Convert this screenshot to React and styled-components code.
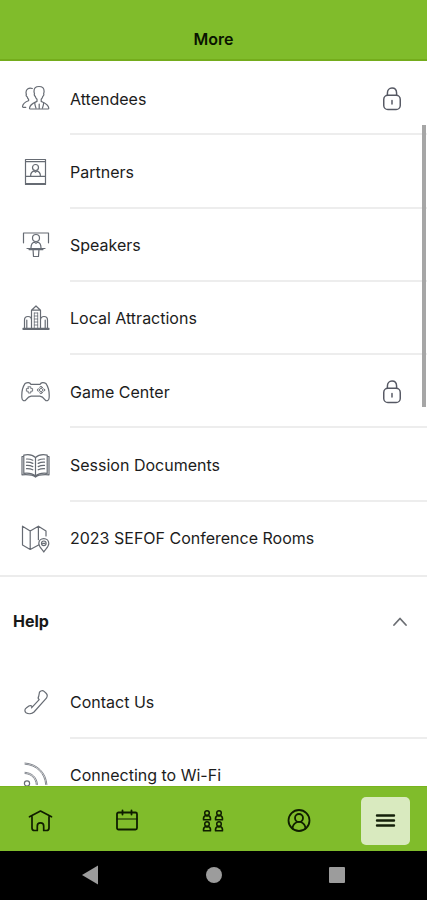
import React from "react";
import styled, { createGlobalStyle } from "styled-components";

const GlobalStyle = createGlobalStyle`
  *, *::before, *::after { box-sizing: border-box; }
  body { margin: 0; background: #fff; }
  button { font: inherit; color: inherit; background: none; border: 0; padding: 0; cursor: pointer; }
`;

const Screen = styled.div`
  position: relative;
  display: flex;
  flex-direction: column;
  height: 100vh;
  overflow: hidden;
  background: #fff;
  color: #1c1c1c;
  font-family: Inter, "Liberation Sans", sans-serif;
  font-size: 16px;
  line-height: 24px;
`;

const Header = styled.header`
  flex: none;
  display: flex;
  justify-content: center;
  padding: 27px 16px 8px;
  background: #80bc2b;
  border-bottom: 2px solid #74ac1c;
`;

const Title = styled.h1`
  margin: 0;
  color: #0a1400;
  font-size: 16px;
  font-weight: 600;
  line-height: 24px;
`;

const Content = styled.main`
  position: relative;
  flex: 1;
  min-height: 0;
  overflow: hidden;
`;

const ScrollThumb = styled.div`
  position: absolute;
  top: 64px;
  right: 1px;
  width: 4px;
  height: 282px;
  background: #a6a6a6;
`;

const List = styled.ul`
  display: grid;
  grid-auto-rows: 1fr;
  margin: 0;
  padding: 1px 0 0;
  list-style: none;
  min-height: ${(p) => p.$minHeight}px;
  border-bottom: 2px solid #ececec;
`;

const Item = styled.li`
  display: flex;
  min-height: 73px;
`;

const ItemLink = styled.a`
  flex: 1;
  display: flex;
  color: inherit;
  text-decoration: none;
`;

const IconSlot = styled.span`
  flex: none;
  display: flex;
  align-items: center;
  justify-content: center;
  width: 70px;
`;

const ItemBody = styled.span`
  flex: 1;
  display: flex;
  align-items: center;
  justify-content: space-between;
  padding: 2px 24px 0 0;
  border-bottom: 2px solid #ededed;
  ${Item}:last-child & { border-bottom-color: transparent; }
`;

const SectionToggle = styled.button`
  display: flex;
  align-items: center;
  justify-content: space-between;
  width: 100%;
  height: 87px;
  padding: 0 19px 0 13px;
  color: #181818;
  font-weight: 700;
`;

const TabBar = styled.nav`
  flex: none;
  display: flex;
  justify-content: space-between;
  padding: 10px 17px 6px 16px;
  background: #80bc2b;
  border-top: 1px solid #78b41e;
`;

const Tab = styled.button`
  display: flex;
  align-items: center;
  justify-content: center;
  width: 49px;
  height: 48px;
  border-radius: 5px;
  color: #0c1900;
  background: ${(p) => (p.$active ? "#d9eabf" : "transparent")};
`;

const SystemBar = styled.div`
  flex: none;
  display: flex;
  align-items: center;
  justify-content: space-between;
  height: 49px;
  padding: 0 18% 2px;
  background: #000;
  color: #9c9c9c;
`;

const SystemButton = styled.button`
  display: flex;
  align-items: center;
  justify-content: center;
`;

const Line = styled.svg`
  display: block;
  flex: none;
  fill: none;
  stroke: ${(p) => p.$color || "#666b73"};
  stroke-width: ${(p) => p.$weight || 1.2};
  stroke-linecap: round;
  stroke-linejoin: round;
`;

const icon = (children) => () => (
  <Line width="30" height="30" viewBox="0 0 30 30" aria-hidden="true">
    {children}
  </Line>
);

const AttendeesIcon = icon(
  <>
    <path d="M19 2.500c-3 0-5 1.800-5 4.800 0 1.200.3 1.800.5 2.600-.6.600 0 2 .8 2.400.3 1.400.9 2.200 1.700 2.900v2.200c-3.600 1.600-7 2.600-7.500 6.800 0 .6.3.8.9.8h17.500c.6 0 .9-.2.9-.8-.4-4.200-4-5.200-7.600-6.800v-2.200c.8-.7 1.300-1.500 1.600-2.900.9-.4 1.400-1.800.8-2.400.2-.8.500-1.400.5-2.600 0-3-2.100-4.800-5.100-4.800z" />
    <path d="M14.700 18.500c.1 2.400.6 3.900 1.300 5.700M23.700 18.500c-.1 2.400-.6 3.900-1.300 5.700M19.200 20v4.400" />
    <path d="M12.300 4.500C9 3.200 6 5 6 8.300c0 1 .2 1.500.4 2.200-.7.600-.1 1.900.8 2.300.2 1.300.8 1.900 1.400 2.500v1.400c-2.900 1.200-5.600 2.200-6.100 5.800 0 .5.300.8.900.8h2.400" />
  </>
);

const PartnersIcon = icon(
  <>
    <path d="M5.500 2.500h20v25h-20zM5.500 4.600h20M5.500 19.300h20M6.400 26.500h18.200" />
    <circle cx="15.500" cy="10.500" r="3" />
    <path d="M10.700 19v-1.300c.2-2.300 1.700-3.200 3.400-3.800l1.400 1.300 1.400-1.300c1.700.6 3.200 1.500 3.400 3.800V19" />
  </>
);

const SpeakersIcon = icon(
  <>
    <path d="M3.500 12.800V3h25v9.800" />
    <circle cx="16" cy="8" r="3.500" />
    <path d="M11 18c0-3.500 1.400-5.400 3.500-5.800L16 13.400l1.500-1.200c2.100.4 3.500 2.300 3.500 5.800" />
    <path d="M7 18.500h18M13 18.700l.5 7.800h5l.5-7.800M9 19.600h14" />
  </>
);

const CityIcon = icon(
  <>
    <path d="M3 26.500h26M3 25.400h26M11.500 25V7.200L16 3l4.500 4.200V25M12 7.200h8M4.500 25V17c0-2 1.500-3.500 3.500-3.500s3.500 1.300 3.500 3.500M20.500 17c0-2.200 1.500-3.500 3.500-3.500s3.500 1.500 3.500 3.500v8M6.800 25v-8M25.200 25v-8" />
    <path d="M14.300 10v15M17.700 10v15M14.300 10h3.400M14.300 13h3.400M14.300 16h3.400M14.300 19h3.400M14.300 22h3.400" strokeWidth=".8" />
  </>
);

const GameIcon = icon(
  <>
    <path d="M10.800 7.300C10 5 7 5.200 5 6.600 2.500 10.200 1.500 16 1.900 21c.2 3.200 2.800 3.300 4 1.800 1.600-2 3.200-3.400 5.300-3.600h8.600c2.100.2 3.700 1.600 5.300 3.600 1.200 1.500 3.800 1.400 4-1.800.4-5-.6-10.800-3.100-14.400-2-1.400-5-1.600-5.800.7z" />
    <g strokeWidth=".9">
      <path d="M8.200 9.800h2.600v1.800h1.800v2.600h-1.800V16H8.200v-1.800H6.400v-2.600h1.800z" />
      <circle cx="21" cy="10.500" r="1.200" />
      <circle cx="18.500" cy="13" r="1.200" />
      <circle cx="23.500" cy="13" r="1.200" />
      <circle cx="21" cy="15.500" r="1.200" />
    </g>
  </>
);

const BookIcon = icon(
  <>
    <path d="M15.500 7.500C12.500 4.600 7.500 4.400 3.800 5.100v18.300c4.300-.5 8.700 0 11.700 2.600 3-2.600 7.400-3.100 11.700-2.600V5.100c-3.700-.7-8.700-.5-11.700 2.400zM15.500 7.500V25M3.800 6.500H2v18.300c5.500-.4 10.200-.7 13.500 2.300 3.300-3 8-2.700 13.500-2.300V6.500h-1.800" />
    <path d="M6.500 9c2.300-.1 4.500.3 6.300 1.200M6.500 12.200c2.300-.1 4.500.3 6.300 1.200M6.500 15.400c2.300-.1 4.500.3 6.300 1.200M6.500 18.600c2.300-.1 4.500.3 6.300 1.200M24.500 9c-2.300-.1-4.500.3-6.300 1.200M24.500 12.200c-2.300-.1-4.500.3-6.300 1.200M24.500 15.400c-2.300-.1-4.500.3-6.300 1.200M24.500 18.600c-2.300-.1-4.500.3-6.300 1.200" />
  </>
);

const MapIcon = icon(
  <>
    <path d="M18.600 22l-8.400 4.500L2.500 22V3.200l7.700 4.700 8.200-4.700 7.600 4.700v5M10.200 7.900v18.600M18.400 3.200v13.500" />
    <path d="M23.800 29c-1.400-2.500-5-4.900-5-8.400 0-2.900 2.200-5 5-5s5 2.100 5 5c0 3.500-3.600 5.900-5 8.400z" />
    <circle cx="23.800" cy="20.300" r="2.300" />
    <path d="M22.600 20.300h2.400" />
  </>
);

const PhoneIcon = icon(
  <path d="M19.500 5.200c1.200-1.600 3.200-2 4.600-.8l2 1.800c1.500 1.400 1.400 3.200.3 5L14 25c-2.200 2-5.700 2.200-8 .7-1.600-1.200-1.400-3.600.2-4.700l2.700-2c1.200-.7 2.600-.2 3.500.8l6.800-7.200c-1.200-1-1.200-2.300-.5-3.300zM12.400 19.800l-.9 1" />
);

const WifiIcon = icon(
  <>
    <circle cx="7" cy="23.500" r="2.600" />
    <path d="M5 4.200c11.500.7 20 9.200 20.700 20.300M5 3c12.300.8 21.200 9.800 21.900 21.500M5 13.500c6.500.5 10.800 4.800 11.300 11M5 12.300c7.200.5 12 5.200 12.500 12.200" strokeWidth=".8" />
  </>
);

const LockIcon = () => (
  <Line width="22" height="28" viewBox="0 0 24 30" $color="#555863" $weight={1.6} role="img" aria-label="Locked">
    <rect x="3" y="11" width="18" height="15.500" rx="4.500" />
    <path d="M7 11V8.500C7 5.200 9 3 12 3s5 2.200 5 5.500V11M12 16.500v4" />
  </Line>
);

const HomeIcon = () => (
  <Line width="26" height="26" viewBox="0 0 26 26" $color="#0f1d00" $weight={1.7} aria-hidden="true">
    <path d="M1.500 8.800 12.500 3l11 5.800M4 8.500V20c0 1.700 1 2.500 2.500 2.500h2.800V18c0-2 1.200-3.200 3.200-3.200s3.200 1.200 3.200 3.200v4.500h2.800c1.500 0 2.500-.8 2.500-2.500V8.500" />
  </Line>
);

const CalendarIcon = () => (
  <Line width="26" height="26" viewBox="0 0 26 26" $color="#0f1d00" $weight={1.8} aria-hidden="true">
    <rect x="3" y="4.500" width="20" height="17" rx="1.500" />
    <path d="M8.500 2.500v4M17.500 2.500v4" />
    <path d="M3 11h20" strokeWidth="1.200" />
  </Line>
);

const Person = ({ at }) => (
  <g transform={`translate(${at})`}>
    <circle cx="5" cy="3" r="2.300" />
    <path d="M1.500 9.800c-.4-2.700.8-3.800 2.400-4.500L5 6.300l1.100-1c1.600.7 2.800 1.800 2.400 4.500z" />
  </g>
);

const GroupIcon = () => (
  <Line width="26" height="26" viewBox="0 0 26 26" $color="#0f1d00" $weight={1.5} aria-hidden="true">
    <Person at="2 2" />
    <Person at="14 2" />
    <Person at="2 13" />
    <Person at="14 13" />
  </Line>
);

const ProfileIcon = () => (
  <Line width="26" height="26" viewBox="0 0 26 26" $color="#0f1d00" $weight={1.8} aria-hidden="true">
    <circle cx="13" cy="12.500" r="10.500" />
    <circle cx="13" cy="10" r="4" />
    <path d="M6.500 20.500c.2-3.400 1.800-5.300 4.700-6.500M19.500 20.500c-.2-3.400-1.800-5.300-4.700-6.500" />
  </Line>
);

const MenuIcon = () => (
  <Line width="26" height="26" viewBox="0 0 26 26" $color="#14200a" $weight={2.400} aria-hidden="true">
    <path d="M4 7.500h17M4 12.500h17M4 17.500h17" />
  </Line>
);

const ChevronUpIcon = () => (
  <Line width="16" height="16" viewBox="0 0 16 16" $color="#6b6e73" $weight={1.8} aria-hidden="true">
    <path d="m2 12 6-6.500 6 6.500" />
  </Line>
);

const Solid = styled.svg`
  display: block;
  fill: currentColor;
`;

const mainItems = [
  { label: "Attendees", Icon: AttendeesIcon, locked: true },
  { label: "Partners", Icon: PartnersIcon },
  { label: "Speakers", Icon: SpeakersIcon },
  { label: "Local Attractions", Icon: CityIcon },
  { label: "Game Center", Icon: GameIcon, locked: true },
  { label: "Session Documents", Icon: BookIcon },
  { label: "2023 SEFOF Conference Rooms", Icon: MapIcon },
];

const helpItems = [
  { label: "Contact Us", Icon: PhoneIcon },
  { label: "Connecting to Wi-Fi", Icon: WifiIcon },
];

const tabs = [
  { label: "Home", Icon: HomeIcon },
  { label: "Schedule", Icon: CalendarIcon },
  { label: "Attendees", Icon: GroupIcon },
  { label: "Profile", Icon: ProfileIcon },
  { label: "More", Icon: MenuIcon, active: true },
];

const systemButtons = [
  { label: "Back", shape: <path d="M5 12 21 2.500v19z" /> },
  { label: "Home", shape: <circle cx="12" cy="12" r="8" /> },
  { label: "Recent apps", shape: <rect x="3" y="4" width="16" height="16" rx="1" /> },
];

function MenuList({ items, minHeight }) {
  return (
    <List $minHeight={minHeight}>
      {items.map(({ label, Icon, locked }) => (
        <Item key={label}>
          <ItemLink href="#">
            <IconSlot>
              <Icon />
            </IconSlot>
            <ItemBody>
              {label}
              {locked && <LockIcon />}
            </ItemBody>
          </ItemLink>
        </Item>
      ))}
    </List>
  );
}

export default function App() {
  return (
    <Screen>
      <GlobalStyle />
      <Header>
        <Title>More</Title>
      </Header>
      <Content>
        <MenuList items={mainItems} minHeight={516} />
        <SectionToggle aria-expanded="true">
          Help
          <ChevronUpIcon />
        </SectionToggle>
        <MenuList items={helpItems} minHeight={150} />
        <ScrollThumb />
      </Content>
      <TabBar aria-label="Main">
        {tabs.map(({ label, Icon, active }) => (
          <Tab key={label} $active={active} aria-label={label} aria-current={active ? "page" : undefined}>
            <Icon />
          </Tab>
        ))}
      </TabBar>
      <SystemBar>
        {systemButtons.map(({ label, shape }) => (
          <SystemButton key={label} aria-label={label}>
            <Solid width="24" height="24" viewBox="0 0 24 24" aria-hidden="true">
              {shape}
            </Solid>
          </SystemButton>
        ))}
      </SystemBar>
    </Screen>
  );
}
